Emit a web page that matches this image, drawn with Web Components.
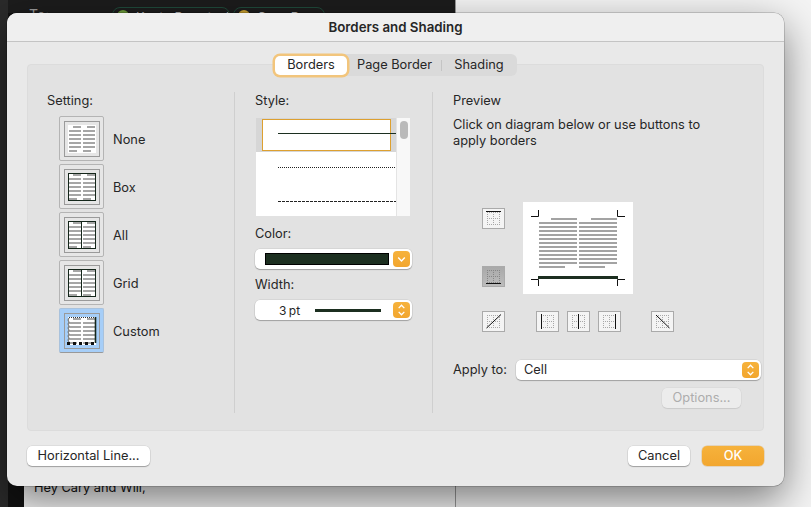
<!DOCTYPE html>
<html>
<head>
<meta charset="utf-8">
<title>Borders and Shading</title>
<style>
  html, body { margin: 0; padding: 0; width: 811px; height: 507px; overflow: hidden; }
  body { font-family: Inter, "Liberation Sans", sans-serif; font-size: 12.8px; color: #262626; }
</style>
</head>
<body>
<mail-backdrop>
  <borders-dialog></borders-dialog>
</mail-backdrop>

<script>
class MailBackdrop extends HTMLElement {
  constructor() {
    super();
    this.attachShadow({ mode: 'open' }).innerHTML = `
      <style>
        :host { display: grid; position: relative; width: 811px; height: 507px; overflow: hidden;
                grid-template-columns: 456px 1fr; background: #f4f4f4; }
        .left { position: relative; display: grid; grid-template-rows: 1fr auto; background: #111; border-right: 1px solid #999; box-sizing: border-box; }
        .head { display: flex; background: #1c1c1c; height: 13px; overflow: hidden; box-sizing: border-box; padding: 6px 0 0 29px;
                color: #9a9a9a; font-size: 14px; align-self: start; }
        .to { width: 83px; flex: none; }
        .chip { display: flex; gap: 7px; flex: none; height: 22px; box-sizing: border-box; margin-top: 1px;
                border: 1px solid #1f4a3a; border-radius: 8px; padding: 2px 4px; color: #c8c8c8; margin-right: 3px;
                font-size: 12.8px; letter-spacing: .3px; white-space: nowrap; overflow: hidden; }
        .one { width: 118px; }
        .two { width: 92px; }
        .dot { width: 12px; height: 12px; border-radius: 50%; background: #6c9a3a; flex: none; }
        .dot.y { background: #c9a030; }
        .page { margin-left: 24px; background: #f4f4f4; padding-left: 10px; height: 40px; box-sizing: border-box;
                color: #111; font-size: 12.8px; padding-top: 13px; align-self: end; }
        .gutter { position: absolute; left: 0; top: 0; bottom: 0; width: 8px; background: #2a2a2a; }
        ::slotted(borders-dialog) { position: absolute; left: 7px; top: 13px; }
      </style>
      <div class="left">
        <div class="head">
          <span class="to">To:</span>
          <span class="chip one"><span class="dot"></span>Kevin Petrzinski</span>
          <span class="chip two"><span class="dot y"></span>Cary Rauen</span>
        </div>
        <div class="page">Hey Cary and Will,</div>
        <div class="gutter"></div>
      </div>
      <div></div>
      <slot></slot>
    `
  }
}

class PushButton extends HTMLElement {
  constructor() {
    super();
    this.attachShadow({ mode: 'open' }).innerHTML = `
      <style>
        :host { display: inline-flex; align-items: center; justify-content: center; height: 20px; box-sizing: border-box;
                background: #fff; border-radius: 5px; font-size: 12.8px; color: #262626; padding-bottom: 1px;
                box-shadow: 0 1px 1px rgba(0,0,0,.28), 0 0 0 .5px rgba(0,0,0,.1); }
        :host([primary]) { background: linear-gradient(#f6b23c, #f2a62e); color: #fff; font-weight: 500; box-shadow: 0 0 0 .5px rgba(200,130,20,.4); }
        :host([disabled]) { background: #ececec; color: #adadad; box-shadow: 0 1px 1px rgba(0,0,0,.08), 0 0 0 .5px rgba(0,0,0,.05); }
      </style>
      <slot></slot>
    `
  }
}

class TabStrip extends HTMLElement {
  constructor() {
    super();
    this.attachShadow({ mode: 'open' }).innerHTML = `
      <style>
        :host { display: flex; align-items: center; width: 243px; height: 22px; box-sizing: border-box;
                background: #dadada; border-radius: 6px; font-size: 12.8px; color: #262626; }
        span { display: flex; align-items: center; justify-content: center; height: 100%; box-sizing: border-box; padding-bottom: 1px; }
        .on { width: 72px; background: #fff; border-radius: 5px;
              box-shadow: 0 0 0 2.5px #f2c57c; height: 19px; margin-left: 1px; }
        .page { width: 95px; }
        .sep { width: 1px; height: 11px; background: #c4c4c4; padding: 0; margin-left: -1px; }
        .shade { width: 74px; }
      </style>
      <span class="on">Borders</span>
      <span class="page">Page Border</span>
      <span class="sep"></span>
      <span class="shade">Shading</span>
    `
  }
}

const textLines = (x1, x2) => {
  let out = '<path fill="#a6a6a6" d="';
  for (let r = 0; r < 7; r++) {
    const y = 10 + r * 4;
    if (r === 0) out += `M${x1 + 4} ${y}h8v2h-8zM${x2 + 4} ${y}h8v2h-8z`;
    else if (r === 6) out += `M${x1} ${y}h8v2h-8zM${x2} ${y}h8v2h-8z`;
    else out += `M${x1} ${y}h12v2h-12zM${x2} ${y}h12v2h-12z`;
  }
  return out + '"/>';
}

class SettingOption extends HTMLElement {
  constructor() {
    super();
    const kind = this.getAttribute('kind');
    let marks = '';
    const ink = '#14261a';
    if (kind === 'box') marks = `<rect x="9.5" y="9.5" width="27" height="27" fill="none" stroke="${ink}"/>`;
    if (kind === 'all' || kind === 'grid') marks = `<rect x="9.5" y="9.5" width="27" height="27" fill="none" stroke="${ink}"/><path d="M22.5 9v28" stroke="${ink}"/>`;
    if (kind === 'custom') marks = `
      <path d="M10 9.5h26" stroke="#333" stroke-dasharray="1 1"/>
      <path d="M10 10l-1 2 1 2-1 2 1 2-1 2 1 2-1 2 1 2-1 2 1 2-1 2 1 2" fill="none" stroke="#333" stroke-width=".8"/>
      <path d="M36.5 9v26" stroke="${ink}" stroke-width="1.6"/>
      <path d="M8 34h3v3h-3zM14 34h3v3h-3zM20 34h3v3h-3zM26 34h3v3h-3zM32 34h3v3h-3z" fill="#111"/>`;
    this.attachShadow({ mode: 'open' }).innerHTML = `
      <style>
        :host { display: flex; align-items: center; gap: 9px; height: 45px; }
        .btn { width: 45px; height: 45px; box-sizing: border-box; border: 1px solid #b4b4b4; border-radius: 2px;
               background: #e6e6e6; display: block; }
        :host([kind=custom]) .btn { background: #a6cef8; border-color: #a9c2dc; border-bottom-color: #999; }
        svg { display: block; margin: -1px; }
        span { font-size: 12.8px; padding-top: 2px; }
      </style>
      <div class="btn">
        <svg width="45" height="45" viewBox="0 0 45 45">
          <rect x="5.5" y="5.5" width="35" height="35" fill="none" stroke="#9a9a9a"/>
          <rect x="9" y="9" width="28" height="28" fill="#fff"/>
          ${textLines(10, 24)}
          ${marks}
        </svg>
      </div>
      <span><slot></slot></span>
    `
  }
}

class StyleList extends HTMLElement {
  constructor() {
    super();
    this.attachShadow({ mode: 'open' }).innerHTML = `
      <style>
        :host { display: grid; grid-template-columns: 140px 14px; width: 154px; height: 98px; background: #fff; margin-left: 1px; overflow: hidden; }
        .rows { display: flex; flex-direction: column; }
        .row { height: 34px; flex: none; padding: 15px 0 0 22px; box-sizing: border-box; }
        .row i { display: block; height: 1px; }
        .row.sel { position: relative; background: #d6d6d6; padding-top: 15px; }
        .row.sel::before { content: ''; position: absolute; left: 6px; top: 1px; width: 129px; height: 32px; box-sizing: border-box;
                           background: #fff; border: 1px solid #dda030; }
        .row.sel i { position: relative; background: #1c2f20; }
        .dot i { background: repeating-linear-gradient(90deg, #222 0 1px, transparent 1px 2px); }
        .dash i { background: repeating-linear-gradient(90deg, #222 0 3px, transparent 3px 4px); }
        .bar { background: #f8f8f8; border-left: 1px solid #e4e4e4; padding: 3px 2px 0 3px; box-sizing: border-box; }
        .bar b { display: block; height: 18px; background: #bababa; border-radius: 4px; }
      </style>
      <div class="rows">
        <div class="row sel"><i></i></div>
        <div class="row dot"><i></i></div>
        <div class="row dash"><i></i></div>
      </div>
      <div class="bar"><b></b></div>
    `
  }
}

const chevronDown = '<path d="M5 7l3.5 3.5L12 7" fill="none" stroke="#fff" stroke-width="1.5"/>';
const chevronBoth = '<path d="M5.5 6.5l3-3 3 3M5.5 10.5l3 3 3-3" fill="none" stroke="#fff" stroke-width="1.4"/>';

class PopupSelect extends HTMLElement {
  constructor() {
    super();
    const single = this.hasAttribute('single');
    this.attachShadow({ mode: 'open' }).innerHTML = `
      <style>
        :host { display: flex; align-items: center; height: 20px; box-sizing: border-box; background: #fff; border-radius: 5px;
                box-shadow: 0 1px 1px rgba(0,0,0,.25), 0 0 0 .5px rgba(0,0,0,.1); font-size: 12.8px; color: #262626; }
        .value { flex: 1; min-width: 0; display: flex; align-items: center; }
        svg { display: block; width: 17px; height: 16px; margin-right: 2px; background: linear-gradient(#f6b23c, #f2a62e); border-radius: 4px; flex: none; }
      </style>
      <div class="value"><slot></slot></div>
      <svg viewBox="0 0 17 17">${single ? chevronDown : chevronBoth}</svg>
    `
  }
}

const dotGrid = `<path class="dots" d="M5 4.5h13M5 10.5h13M5 16.5h13M5.5 4v13M11.5 4v13M17.5 4v13" stroke-dasharray="1 1" fill="none"/>`;
const borderMarks = {
  top: '<path d="M4 3.5h15" stroke="#111"/>',
  bottom: '<path d="M4 17.5h15" stroke="#111"/>',
  left: '<path d="M5.5 3v15" stroke="#111"/>',
  middle: '<path d="M11.5 3v15" stroke="#111"/>',
  right: '<path d="M17.5 3v15" stroke="#111"/>',
  up: '<path d="M4.5 17L19 3.5" stroke="#111"/>',
  down: '<path d="M5 4l13.5 13" stroke="#111"/>'
}

class BorderButton extends HTMLElement {
  constructor() {
    super();
    this.attachShadow({ mode: 'open' }).innerHTML = `
      <style>
        :host { display: block; width: 23px; height: 21px; box-sizing: border-box; flex: none;
                border: 1px solid #aaa; outline: .5px solid #aaa; outline-offset: -1.5px; background: #f4f4f4; }
        :host([pressed]) { background: linear-gradient(#a9a9a9, #bcbcbc); }
        svg { display: block; margin: -1px; }
        .dots { stroke: #a8a8a8; }
        :host([pressed]) .dots { stroke: #868686; }
      </style>
      <svg width="23" height="21" viewBox="0 0 23 21">${dotGrid}${borderMarks[this.getAttribute('kind')]}</svg>
    `
  }
}

class PreviewPage extends HTMLElement {
  constructor() {
    super();
    let lines = '';
    for (let r = 0; r < 13; r++) {
      const y = 16 + r * 4;
      if (r === 0) lines += `M28 ${y}h26v2h-26zM68 ${y}h26v2h-26z`;
      else if (r === 12) lines += `M16 ${y}h26v2h-26zM56 ${y}h26v2h-26z`;
      else lines += `M16 ${y}h38v2h-38zM56 ${y}h38v2h-38z`;
    }
    this.attachShadow({ mode: 'open' }).innerHTML = `
      <style>
        :host { display: block; width: 110px; height: 92px; background: #fff; flex: none; }
        svg { display: block; }
      </style>
      <svg width="110" height="92" viewBox="0 0 110 92">
        <path fill="#a3a3a3" d="${lines}"/>
        <rect x="15" y="74" width="80" height="3" fill="#1c2f20"/>
        <path d="M8 14.5h7.5V8M102 14.5h-7.5V8M8 77.5h7.5V84M102 77.5h-7.5V84" fill="none" stroke="#111"/>
      </svg>
    `
  }
}

class BordersDialog extends HTMLElement {
  constructor() {
    super();
    this.attachShadow({ mode: 'open' }).innerHTML = `
      <style>
        :host { display: block; width: 777px; height: 473px; box-sizing: border-box; border-radius: 10px; background: #e9e9e9;
                box-shadow: 0 0 0 .5px rgba(0,0,0,.3), 0 14px 40px rgba(0,0,0,.5); font-size: 12.8px; color: #262626; }
        .title { height: 29px; box-sizing: border-box; background: #efefef; border-bottom: 1px solid #c4c4c4; border-radius: 10px 10px 0 0;
                 font-weight: 600; font-size: 13.3px; text-align: center; line-height: 28px; }
        tab-strip { margin: 12px auto -12px; position: relative; z-index: 1; }
        .panel { display: grid; grid-template-columns: 206px 198px 1fr; margin: 0 20px; height: 367px; box-sizing: border-box;
                 background: #e2e2e2; border: 1px solid #dcdcdc; border-radius: 4px; padding: 27px 0 17px; }
        .col { min-width: 0; }
        .col + .col { border-left: 1px solid #cfcfcf; }
        .label { display: block; height: 16px; line-height: 18px; }
        .setting { padding-left: 19px; display: flex; flex-direction: column; }
        .options { display: flex; flex-direction: column; gap: 3px; margin: 8px 0 0 12px; }
        .style { padding-left: 20px; display: flex; flex-direction: column; }
        .style .label:first-child { margin-bottom: 10px; }
        .style .label.next { margin-top: 9px; margin-bottom: 8px; }
        .style .label.width { margin-top: 7px; margin-bottom: 8px; }
        .style popup-select { width: 157px; }
        .swatch { width: 124px; height: 12px; margin-left: 10px; box-sizing: border-box; background: #1c2f20; border: 1px solid #000; }
        .pt { width: 60px; box-sizing: border-box; padding-left: 24px; flex: none; font-size: 12px; word-spacing: -1px; }
        .stroke { width: 66px; height: 3px; background: #1c2f20; flex: none; }
        .preview { padding-left: 20px; display: flex; flex-direction: column; }
        .hint { margin: 9px 0 0; line-height: 16px; width: 280px; }
        .diagram { display: flex; gap: 18px; margin: 53px 0 0 29px; }
        .stack { display: flex; flex-direction: column; justify-content: space-between; padding: 6px 0 7px; }
        .row { display: flex; gap: 8px; margin: 17px 0 0 29px; }
        .row .first { margin-right: 23px; }
        .row .last { margin-left: 22px; }
        .apply { display: flex; align-items: center; margin-top: 28px; }
        .apply .label { width: 63px; flex: none; line-height: 16px; }
        .apply popup-select { width: 245px; }
        .cell { padding: 0 0 1px 8px; }
        .opts { align-self: flex-end; width: 79px; margin: 8px 22px 0 0; }
        .foot { display: flex; justify-content: space-between; margin: 15px 20px 0; }
        .foot div { display: flex; gap: 12px; }
        .line { width: 123px; }
        .act { width: 62px; }
      </style>
      <div class="title">Borders and Shading</div>
      <tab-strip></tab-strip>
      <div class="panel">
        <section class="col setting">
          <span class="label">Setting:</span>
          <div class="options">
            <setting-option kind="none">None</setting-option>
            <setting-option kind="box">Box</setting-option>
            <setting-option kind="all">All</setting-option>
            <setting-option kind="grid">Grid</setting-option>
            <setting-option kind="custom">Custom</setting-option>
          </div>
        </section>
        <section class="col style">
          <span class="label">Style:</span>
          <style-list></style-list>
          <span class="label next">Color:</span>
          <popup-select single><div class="swatch"></div></popup-select>
          <span class="label width">Width:</span>
          <popup-select><span class="pt">3 pt</span><span class="stroke"></span></popup-select>
        </section>
        <section class="col preview">
          <span class="label">Preview</span>
          <p class="hint">Click on diagram below or use buttons to<br>apply borders</p>
          <div class="diagram">
            <div class="stack">
              <border-button kind="top"></border-button>
              <border-button kind="bottom" pressed></border-button>
            </div>
            <preview-page></preview-page>
          </div>
          <div class="row">
            <border-button class="first" kind="up"></border-button>
            <border-button kind="left"></border-button>
            <border-button kind="middle"></border-button>
            <border-button kind="right"></border-button>
            <border-button class="last" kind="down"></border-button>
          </div>
          <div class="apply">
            <span class="label">Apply to:</span>
            <popup-select><span class="cell">Cell</span></popup-select>
          </div>
          <push-button class="opts" disabled>Options...</push-button>
        </section>
      </div>
      <div class="foot">
        <push-button class="line">Horizontal Line...</push-button>
        <div>
          <push-button class="act">Cancel</push-button>
          <push-button class="act" primary>OK</push-button>
        </div>
      </div>
    `
  }
}

customElements.define('mail-backdrop', MailBackdrop)
customElements.define('push-button', PushButton)
customElements.define('tab-strip', TabStrip)
customElements.define('setting-option', SettingOption)
customElements.define('style-list', StyleList)
customElements.define('popup-select', PopupSelect)
customElements.define('border-button', BorderButton)
customElements.define('preview-page', PreviewPage)
customElements.define('borders-dialog', BordersDialog)
</script>
</body>
</html>
